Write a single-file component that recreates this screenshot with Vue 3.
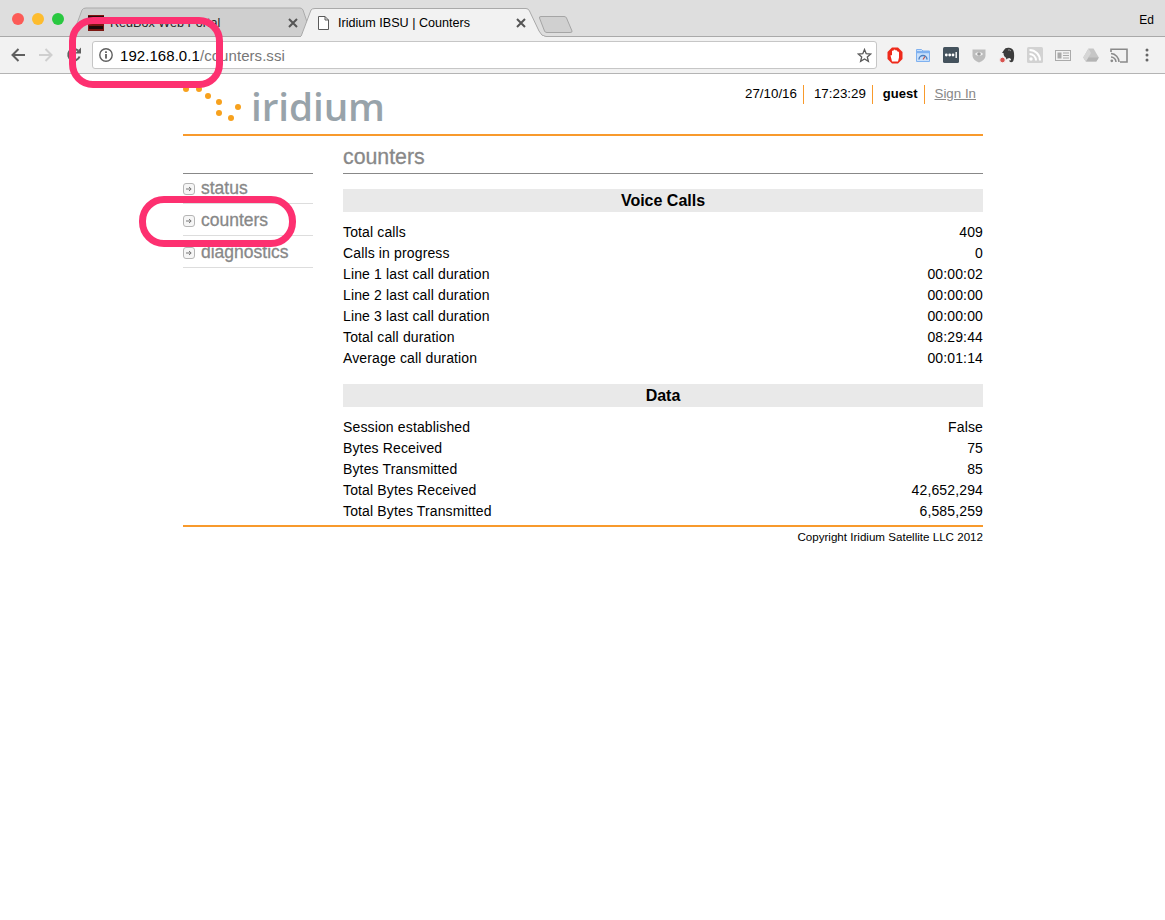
<script setup>
const voice = [
  ['Total calls', '409'],
  ['Calls in progress', '0'],
  ['Line 1 last call duration', '00:00:02'],
  ['Line 2 last call duration', '00:00:00'],
  ['Line 3 last call duration', '00:00:00'],
  ['Total call duration', '08:29:44'],
  ['Average call duration', '00:01:14'],
]
const data = [
  ['Session established', 'False'],
  ['Bytes Received', '75'],
  ['Bytes Transmitted', '85'],
  ['Total Bytes Received', '42,652,294'],
  ['Total Bytes Transmitted', '6,585,259'],
]
const sections = [
  { title: 'Voice Calls', rows: voice },
  { title: 'Data', rows: data },
]
const nav = ['status', 'counters', 'diagnostics']
const dots = [
  [3, 15], [16, 15], [25, 22], [36, 28], [36, 39], [55, 33], [48, 44],
]
</script>

<template>
  <div class="root">
    <div class="chrome">
      <div class="tabstrip">
        <svg class="tabshapes" width="1165" height="37" viewBox="0 0 1165 37">
          <path d="M72 37 L82 10 Q83 8 86 8 L300 8 Q302 8 303 10 L312 37 Z" fill="#cfcfcf" stroke="#ababab" />
          <path d="M0 36.5 H301 L311 10 Q312 8.5 315 8.5 L526 8.5 Q528.500 8.500 529.500 11 L539 31 Q541.500 36.500 546 36.500 H1165" fill="#f2f2f2" stroke="#a9a9a9" />
          <path d="M539.500 18 Q539 16.500 541 16.500 L564 16.500 Q566 16.500 566.500 18 L572 31 Q572.500 32.500 570 32.500 L547 32.500 Q545 32.500 544.500 31 Z" fill="#d0d0d0" stroke="#a5a5a5" />
          <rect x="301" y="36" width="243" height="2" fill="#f2f2f2" />
        </svg>
        <div class="lights">
          <span class="light red"></span>
          <span class="light yellow"></span>
          <span class="light green"></span>
        </div>
        <div class="tab tab-back">
          <svg class="favicon" width="16" height="16" viewBox="0 0 16 16">
            <rect width="16" height="16" fill="#7c1712" />
            <rect y="1" width="16" height="2" fill="#2a0b0a" />
            <rect x="1" y="3" width="14" height="2" fill="#1b0a0a" opacity=".7" />
            <rect x="1" y="11" width="14" height="3" fill="#1b0a0a" />
          </svg>
          <span class="tab-title">RedBox Web Portal</span>
          <svg class="close" width="10" height="10" viewBox="0 0 10 10"><path d="M1 1 L9 9 M9 1 L1 9" stroke="#555" stroke-width="2" /></svg>
        </div>
        <div class="tab tab-front">
          <svg class="doc" width="11" height="14" viewBox="0 0 11 14"><path d="M.5 .5 H7 L10.500 4 V13.500 H.5 Z M7 .5 V4 H10.500" fill="#fff" stroke="#5a5a5a" /></svg>
          <span class="tab-title">Iridium IBSU | Counters</span>
          <svg class="close" width="10" height="10" viewBox="0 0 10 10"><path d="M1 1 L9 9 M9 1 L1 9" stroke="#555" stroke-width="2" /></svg>
        </div>
        <span class="user">Ed</span>
      </div>
      <div class="toolbar">
        <div class="navbtn">
          <svg width="14" height="14" viewBox="0 0 14 14"><path d="M14 7 H2 M7.500 1 L1.500 7 L7.500 13" fill="none" stroke="#5f5f5f" stroke-width="2" /></svg>
        </div>
        <div class="navbtn">
          <svg width="14" height="14" viewBox="0 0 14 14"><path d="M0 7 H12 M6.500 1 L12.500 7 L6.500 13" fill="none" stroke="#cfcfcf" stroke-width="2" /></svg>
        </div>
        <div class="navbtn">
          <svg width="16" height="16" viewBox="0 0 16 16"><path d="M13.500 9.500 A5.800 5.800 0 1 1 12 3.500" fill="none" stroke="#5f5f5f" stroke-width="2" /><path d="M9 6.500 H15 V.5 Z" fill="#5f5f5f" /></svg>
        </div>
        <div class="omnibox">
          <svg class="info" width="14" height="14" viewBox="0 0 14 14"><circle cx="7" cy="7" r="6.200" fill="none" stroke="#5f5f5f" stroke-width="1.400" /><rect x="6.100" y="6" width="1.800" height="4.600" fill="#5f5f5f" /><rect x="6.100" y="3.300" width="1.800" height="1.700" fill="#5f5f5f" /></svg>
          <span class="url"><span class="host">192.168.0.1</span>/counters.ssi</span>
          <svg class="star" width="15" height="15" viewBox="0 0 15 15"><path d="M7.500 1.500 L9.200 5.700 L13.800 6 L10.300 8.900 L11.400 13.400 L7.500 11 L3.600 13.400 L4.700 8.900 L1.200 6 L5.800 5.700 Z" fill="none" stroke="#5a5a5a" stroke-width="1.300" /></svg>
        </div>
        <div class="extensions">
          <div class="ext">
            <svg width="16" height="17" viewBox="0 0 16 17"><path d="M5 .5 H11 L15.500 5 V12 L11 16.500 H5 L.5 12 V5 Z" fill="#ee2a1b" /><path d="M5 14.500 L3.500 8.500 Q4.200 7.300 5 8.500 V4 Q6 3 6.500 4 V3 Q7.500 2 8.500 3 V3.500 Q9.800 2.800 10.300 4 V4.500 Q11.800 4.200 12 5.500 V10.500 L11 14.500 Z" fill="#fff" /></svg>
          </div>
          <div class="ext">
            <svg width="14" height="13" viewBox="0 0 14 13"><path d="M.5 .5 H5.500 L7 2 H13.500 V12.500 H.5 Z" fill="#c9e0fb" stroke="#7fb1f0" /><rect x=".5" y="2" width="13" height="2.200" fill="#7fb1f0" /><path d="M3 10.500 A4 4 0 0 1 11 10.500" fill="none" stroke="#4a7fc0" stroke-width="1.400" /><path d="M7 10.500 L9 7.500" stroke="#c9503f" stroke-width="1.200" /></svg>
          </div>
          <div class="ext">
            <svg width="16" height="16" viewBox="0 0 16 16"><rect width="16" height="16" rx="1.500" fill="#44525d" /><circle cx="3.300" cy="8" r="1.400" fill="#fff" /><circle cx="6.700" cy="8" r="1.400" fill="#fff" /><circle cx="10" cy="8" r="1.400" fill="#fff" /><rect x="12.500" y="5" width="1.400" height="6" fill="#fff" /></svg>
          </div>
          <div class="ext">
            <svg width="14" height="15" viewBox="0 0 14 15"><path d="M.5 1.500 H13.500 V8 Q13 12 7 14.500 Q1 12 .5 8 Z" fill="#bdbdbd" /><path d="M2.800 6 Q7 2 11.200 6 Q7 10 2.800 6 Z" fill="#f2f2f2" /><circle cx="7" cy="6" r="1.800" fill="#9c9c9c" /></svg>
          </div>
          <div class="ext">
            <svg width="16" height="17" viewBox="0 0 16 17"><path d="M5 3 Q6 .5 10 .8 Q14.500 1.200 15 6 Q15.500 12 14 14.500 Q12 16 10.500 14.500 L10.500 13 L12 13.500 Q12.500 11.500 10.500 11 Q8 11 7.500 12.500 Q7 10 5.500 9.500 Q4.500 8 4.500 6 L3 6 Z" fill="#3c3c3c" /><path d="M9 3 Q11 2.500 12 4" fill="none" stroke="#9a9a9a" /><circle cx="3.500" cy="13" r="2.800" fill="#d9534f" stroke="#f2f2f2" /></svg>
          </div>
          <div class="ext">
            <svg width="16" height="16" viewBox="0 0 16 16"><rect width="16" height="16" rx="1.500" fill="#d2d2d2" /><circle cx="4" cy="12" r="1.700" fill="#fff" /><path d="M2.500 7 A6.500 6.500 0 0 1 9 13.500 M2.500 3 A10.500 10.500 0 0 1 13 13.500" fill="none" stroke="#fff" stroke-width="2" /></svg>
          </div>
          <div class="ext">
            <svg width="16" height="11" viewBox="0 0 16 11"><rect x=".5" y=".5" width="15" height="10" fill="none" stroke="#aaa" /><rect x="2.500" y="2.500" width="4" height="6" fill="#aaa" /><path d="M8 3 H14 M8 5.500 H14 M8 8 H14" stroke="#aaa" /></svg>
          </div>
          <div class="ext">
            <svg width="16" height="14" viewBox="0 0 16 14"><path d="M5.500 .5 H10.500 L15.800 9.500 L13.300 13.500 H2.700 L.2 9.500 Z" fill="#c6c6c6" /><path d="M5.500 .5 L8 5 L3 13.500 L.2 9.500 Z" fill="#d6d6d6" /><path d="M3 13.500 L5.500 9.500 H15.800 L13.300 13.500 Z" fill="#b4b4b4" /></svg>
          </div>
          <div class="ext">
            <svg width="18" height="15" viewBox="0 0 18 15"><path d="M1 4 V1.200 H17 V14 H10" fill="none" stroke="#8a8a8a" stroke-width="1.600" /><circle cx="1.800" cy="12.800" r="1.400" fill="#8a8a8a" /><path d="M1 9 A5 5 0 0 1 6 14 M1 5.500 A8.500 8.500 0 0 1 9 14" fill="none" stroke="#8a8a8a" stroke-width="1.500" /></svg>
          </div>
          <div class="ext">
            <svg width="4" height="14" viewBox="0 0 4 14"><circle cx="2" cy="2" r="1.500" fill="#666" /><circle cx="2" cy="7" r="1.500" fill="#666" /><circle cx="2" cy="12" r="1.500" fill="#666" /></svg>
          </div>
        </div>
      </div>
    </div>

    <div class="page">
      <header class="header">
        <div class="logo">
          <svg class="logo-dots" width="58" height="50" viewBox="0 0 58 50">
            <circle v-for="(d, i) in dots" :key="i" :cx="d[0]" :cy="d[1]" r="3" fill="#f7a11d" />
          </svg>
          <span class="logo-text">iridium</span>
        </div>
        <div class="meta">
          <span class="meta-item">27/10/16</span>
          <span class="meta-item">17:23:29</span>
          <span class="meta-item strong">guest</span>
          <a class="signin">Sign In</a>
        </div>
      </header>

      <div class="columns">
        <nav class="side">
          <div v-for="n in nav" :key="n" class="side-item">
            <svg class="side-icon" width="12" height="12" viewBox="0 0 12 12">
              <rect x=".5" y=".5" width="11" height="11" rx="2.500" fill="#f6f6f6" stroke="#b5b5b5" />
              <path d="M3 6 H8 M6 4 L8.200 6 L6 8" fill="none" stroke="#777" />
            </svg>
            <span class="side-label">{{ n }}</span>
          </div>
        </nav>
        <main class="main">
          <h1 class="title">counters</h1>
          <section v-for="s in sections" :key="s.title" class="section">
            <h2 class="band">{{ s.title }}</h2>
            <div v-for="r in s.rows" :key="r[0]" class="row">
              <span>{{ r[0] }}</span>
              <span>{{ r[1] }}</span>
            </div>
          </section>
        </main>
      </div>

      <footer class="footer">Copyright Iridium Satellite LLC 2012</footer>
    </div>

    <div class="mark mark-url"></div>
    <div class="mark mark-nav"></div>
  </div>
</template>

<style scoped>
.root {
  position: relative;
  width: 1165px;
  height: 920px;
  overflow: hidden;
  background: #fff;
  color: #000;
  font-family: "Liberation Sans", Arial, sans-serif;
}
.chrome {
  background: #f2f2f2;
  border-bottom: 1px solid #b4b4b4;
}
.tabstrip {
  position: relative;
  display: flex;
  align-items: center;
  height: 37px;
  background: #dedede;
}
.tabshapes {
  position: absolute;
  left: 0;
  top: 0;
}
.lights {
  position: relative;
  display: flex;
  gap: 8px;
  margin-left: 12px;
  margin-bottom: -1px;
}
.light {
  width: 12px;
  height: 12px;
  border-radius: 50%;
}
.red { background: #fc5b57; }
.yellow { background: #fdbc2e; }
.green { background: #29c840; }
.tab {
  position: relative;
  display: flex;
  align-items: center;
  height: 29px;
  margin-top: 8px;
  font-size: 12.600px;
}
.tab-back {
  width: 211px;
  margin-left: 24px;
  color: #222;
}
.favicon { margin-right: 6px; }
.tab-title { flex: 1; white-space: nowrap; }
.tab-back .close { margin-right: 1px; }
.tab-front {
  width: 225px;
  padding-left: 17px;
  margin-left: 2px;
  box-sizing: border-box;
}
.doc { margin-right: 9px; }
.user {
  position: relative;
  margin-left: auto;
  margin-right: 11px;
  font-size: 12px;
  margin-bottom: -3px;
}
.toolbar {
  display: flex;
  align-items: center;
  height: 36px;
  padding-left: 4px;
}
.navbtn {
  display: flex;
  align-items: center;
  justify-content: center;
  width: 28px;
  height: 28px;
}
.omnibox {
  display: flex;
  align-items: center;
  box-sizing: border-box;
  width: 785px;
  height: 28px;
  margin-left: 4px;
  margin-right: 4px;
  background: #fff;
  border: 1px solid #c6c6c6;
  border-radius: 3px;
  padding-left: 6px;
  padding-right: 4px;
}
.info { margin-right: 7px; }
.url {
  flex: 1;
  font-size: 15px;
  letter-spacing: .06px;
  color: #777;
  white-space: nowrap;
}
.host { color: #000; }
.extensions { display: flex; }
.ext {
  display: flex;
  align-items: center;
  justify-content: center;
  width: 28px;
  height: 28px;
}
.page {
  width: 800px;
  margin-left: 183px;
}
.header {
  display: flex;
  justify-content: space-between;
  height: 60px;
  border-bottom: 2px solid #f89a2c;
}
.logo {
  display: flex;
  align-items: flex-start;
}
.logo-text {
  margin-left: 10px;
  margin-top: 6px;
  font-family: "Open Sans", sans-serif;
  font-weight: 600;
  font-size: 38.700px;
  line-height: 53px;
  letter-spacing: -.1px;
  color: #98a3aa;
}
.meta {
  display: flex;
  align-items: center;
  height: 20px;
  margin-top: 10px;
  margin-right: 7px;
  font-size: 13.330px;
}
.meta-item {
  padding: 0 6px 2px 10px;
  line-height: 17px;
  border-right: 1px solid #f89a2c;
}
.strong {
  font-weight: 700;
  font-size: 13px;
}
.signin {
  margin-left: 10px;
  padding-bottom: 2px;
  color: #888;
  text-decoration: underline;
  line-height: 17px;
}
.columns {
  display: flex;
  gap: 30px;
}
.side {
  width: 130px;
  margin-top: 37px;
  border-top: 1px solid #888;
  height: 94px;
}
.side-item {
  display: flex;
  align-items: center;
  box-sizing: border-box;
  height: 32px;
  border-bottom: 1px solid #ddd;
  font-size: 17.500px;
  color: #888;
}
.side-item:first-child { margin-top: -2px; }
.side-label {
  padding-top: 2px;
  -webkit-text-stroke: .3px #888;
}
.side-icon {
  margin-right: 6px;
  margin-top: 3px;
}
.main { width: 640px; }
.title {
  box-sizing: content-box;
  height: 27px;
  margin: 10px 0 0;
  border-bottom: 1px solid #888;
  font-size: 21.300px;
  font-weight: 400;
  line-height: 22px;
  color: #888;
  -webkit-text-stroke: .3px #888;
}
.section { margin-top: 15px; }
.band {
  height: 23px;
  margin: 0 0 10px;
  background: #e9e9e9;
  text-align: center;
  font-size: 16px;
  font-weight: 700;
  line-height: 23px;
}
.row {
  display: flex;
  justify-content: space-between;
  height: 21px;
  font-size: 14px;
  letter-spacing: .14px;
  line-height: 21px;
}
.footer {
  margin-top: 3px;
  border-top: 2px solid #f89a2c;
  padding-top: 2px;
  text-align: right;
  font-size: 11.600px;
  line-height: 16px;
}
.mark {
  position: absolute;
  box-sizing: border-box;
  border: 7px solid #fd3070;
}
.mark-url {
  left: 69px;
  top: 17px;
  width: 154px;
  height: 71px;
  border-radius: 24px;
}
.mark-nav {
  left: 139px;
  top: 196px;
  width: 157px;
  height: 51px;
  border-radius: 25px;
}
</style>
